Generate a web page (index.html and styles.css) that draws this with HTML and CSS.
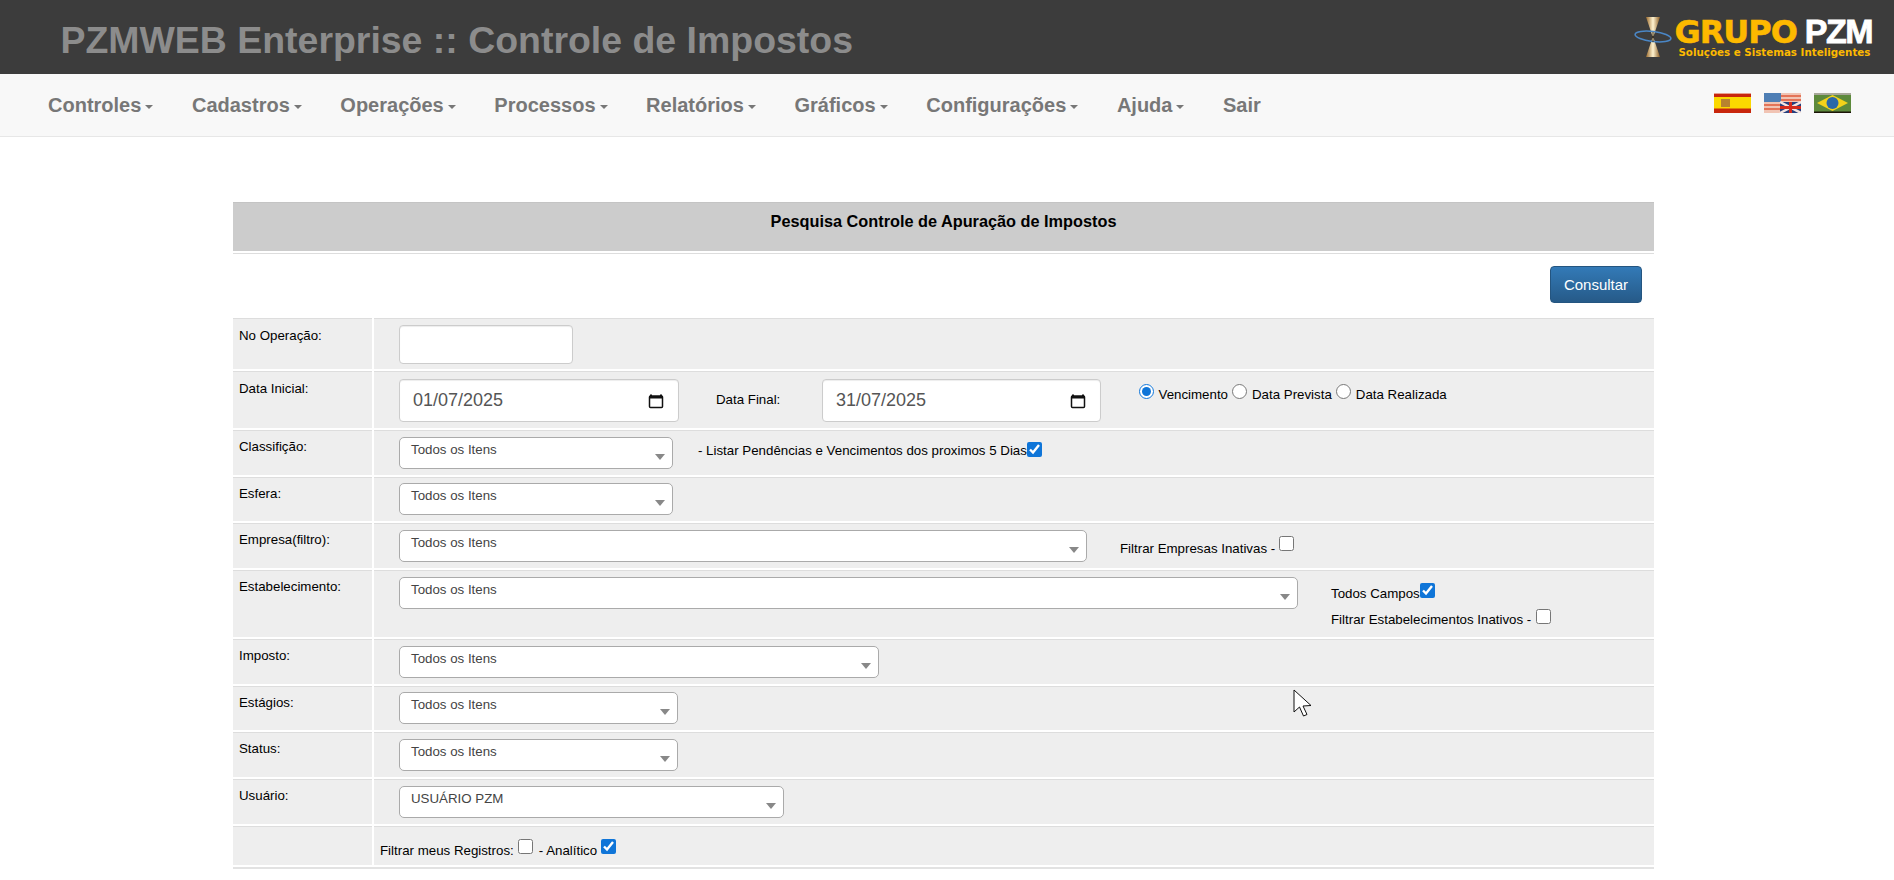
FILE: index.html
```html
<!DOCTYPE html>
<html lang="pt-BR">
<head>
<meta charset="utf-8">
<title>PZMWEB Enterprise :: Controle de Impostos</title>
<link rel="stylesheet" href="styles.css">
</head>
<body>
<header class="topbar">
  <h1 class="title">PZMWEB Enterprise :: Controle de Impostos</h1>
  <div class="logo">
    <svg class="logo-mark" width="38" height="40" viewBox="0 0 38 40">
      <defs>
        <linearGradient id="gold" x1="0" x2="1" y1="0" y2="0">
          <stop offset="0" stop-color="#9a6a2c"/>
          <stop offset=".5" stop-color="#fff3d0"/>
          <stop offset="1" stop-color="#8a5c24"/>
        </linearGradient>
      </defs>
      <path d="M12 0H26L19.6 19H18.4ZM18.4 21H19.6L26 40H12Z" fill="url(#gold)"/>
      <ellipse cx="19" cy="19.5" rx="18" ry="5" transform="rotate(7 19 19.5)" fill="none" stroke="#4a86c5" stroke-width="1.6"/>
      <rect x="18.5" y="15" width="1" height="10" fill="#3a2a10"/>
    </svg>
    <div class="logo-text">
      <div class="logo-name">GRUPO <span class="logo-white">PZM</span></div>
      <div class="logo-sub">Soluções e Sistemas Inteligentes</div>
    </div>
  </div>
</header>

<nav class="navbar">
  <ul class="menu">
    <li class="menu-item">Controles<span class="caret"></span></li>
    <li class="menu-item">Cadastros<span class="caret"></span></li>
    <li class="menu-item">Operações<span class="caret"></span></li>
    <li class="menu-item">Processos<span class="caret"></span></li>
    <li class="menu-item">Relatórios<span class="caret"></span></li>
    <li class="menu-item">Gráficos<span class="caret"></span></li>
    <li class="menu-item">Configurações<span class="caret"></span></li>
    <li class="menu-item">Ajuda<span class="caret"></span></li>
    <li class="menu-item">Sair</li>
  </ul>
  <div class="flags">
    <svg width="37" height="20" viewBox="0 0 37 20">
      <rect width="37" height="20" fill="#c8260c"/>
      <rect y="4" width="37" height="11.500" fill="#fbd800"/>
      <rect x="7" y="6" width="9" height="8" fill="#b8832e"/>
      <rect y="0" width="37" height="1" fill="#e8a090"/>
    </svg>
    <svg width="37" height="20" viewBox="0 0 37 20">
      <rect width="37" height="20" fill="#f1c4b4"/>
      <rect width="17" height="9" fill="#4f7fb5"/>
      <path d="M0 12H16M17 3H37M17 7H37M0 16H16" stroke="#e05a3a" stroke-width="1.4"/>
      <rect x="16" y="9" width="21" height="11" fill="#27407f"/>
      <path d="M16 9L37 20M37 9L16 20" stroke="#f4e4e0" stroke-width="2.500"/>
      <path d="M26.500 9V20M16 14.500H37" stroke="#d42a1c" stroke-width="3"/>
    </svg>
    <svg width="37" height="20" viewBox="0 0 37 20">
      <rect width="37" height="20" fill="#5d8a3c"/>
      <rect y="0" width="37" height="2" fill="#a8a89a"/>
      <rect y="18.500" width="37" height="1.500" fill="#1c1408"/>
      <path d="M18.500 2L34 10L18.500 18L3 10Z" fill="#f3d21a"/>
      <circle cx="18.500" cy="10" r="6" fill="#2a68a8"/>
    </svg>
  </div>
</nav>

<main class="page">
  <h2 class="panel-title">Pesquisa Controle de Apuração de Impostos</h2>
  <div class="actions"><button class="btn" type="button">Consultar</button></div>

  <div class="row row-top">
    <div class="cell-label">No Operação:</div>
    <div class="cell-value row-op"><input class="text-input" type="text"></div>
  </div>

  <div class="row row-top">
    <div class="cell-label">Data Inicial:</div>
    <div class="cell-value row-date">
      <div class="date-input date-from"><span>01/07/2025</span><svg class="cal" width="16" height="16" viewBox="0 0 16 16"><path d="M3 1.500V3M13 1.500V3" stroke="#111" stroke-width="2"/><rect x="1.500" y="3" width="13" height="11.500" rx="1" fill="none" stroke="#111" stroke-width="1.500"/><rect x="1.500" y="3" width="13" height="2.500" fill="#111"/></svg></div>
      <span class="date-label">Data Final:</span>
      <div class="date-input"><span>31/07/2025</span><svg class="cal" width="16" height="16" viewBox="0 0 16 16"><path d="M3 1.500V3M13 1.500V3" stroke="#111" stroke-width="2"/><rect x="1.500" y="3" width="13" height="11.500" rx="1" fill="none" stroke="#111" stroke-width="1.500"/><rect x="1.500" y="3" width="13" height="2.500" fill="#111"/></svg></div>
      <div class="radios">
        <input class="tick" type="radio" name="d" checked><span>Vencimento</span>
        <input class="tick" type="radio" name="d"><span>Data Prevista</span>
        <input class="tick" type="radio" name="d"><span>Data Realizada</span>
      </div>
    </div>
  </div>

  <div class="row">
    <div class="cell-label">Classifição:</div>
    <div class="cell-value">
      <div class="select w-class">Todos os Itens<span class="arrow"></span></div>
      <div class="note note-list"><span>- Listar Pendências e Vencimentos dos proximos 5 Dias</span><input class="tick" type="checkbox" checked></div>
    </div>
  </div>

  <div class="row">
    <div class="cell-label">Esfera:</div>
    <div class="cell-value"><div class="select w-class">Todos os Itens<span class="arrow"></span></div></div>
  </div>

  <div class="row">
    <div class="cell-label">Empresa(filtro):</div>
    <div class="cell-value">
      <div class="select w-emp">Todos os Itens<span class="arrow"></span></div>
      <div class="note note-emp"><span>Filtrar Empresas Inativas -</span><input class="tick tick-gap tick-up4" type="checkbox"></div>
    </div>
  </div>

  <div class="row">
    <div class="cell-label">Estabelecimento:</div>
    <div class="cell-value row-est">
      <div class="select w-est">Todos os Itens<span class="arrow"></span></div>
      <div class="note-stack">
        <div class="note"><span>Todos Campos</span><input class="tick tick-up3" type="checkbox" checked></div>
        <div class="note"><span>Filtrar Estabelecimentos Inativos -</span><input class="tick tick-gap-wide tick-up2" type="checkbox"></div>
      </div>
    </div>
  </div>

  <div class="row">
    <div class="cell-label">Imposto:</div>
    <div class="cell-value"><div class="select w-imp">Todos os Itens<span class="arrow"></span></div></div>
  </div>

  <div class="row">
    <div class="cell-label">Estágios:</div>
    <div class="cell-value"><div class="select w-est2">Todos os Itens<span class="arrow"></span></div></div>
  </div>

  <div class="row">
    <div class="cell-label">Status:</div>
    <div class="cell-value"><div class="select w-est2">Todos os Itens<span class="arrow"></span></div></div>
  </div>

  <div class="row">
    <div class="cell-label">Usuário:</div>
    <div class="cell-value"><div class="select w-user">USUÁRIO PZM<span class="arrow"></span></div></div>
  </div>

  <div class="row row-last">
    <div class="cell-label"></div>
    <div class="cell-value row-filter">
      <span>Filtrar meus Registros:</span><input class="tick tick-gap tick-up3" type="checkbox">
      <span class="after-tick">- Analítico</span><input class="tick tick-gap tick-up3" type="checkbox" checked>
    </div>
  </div>
</main>
<footer class="page-end"></footer>

<svg class="pointer" width="20" height="28" viewBox="0 0 20 28">
  <path d="M1 1V23L6.500 18L10.500 27L14 25.500L10 17L18 16.500Z" fill="#fff" stroke="#111" stroke-width="1"/>
</svg>
</body>
</html>
```

FILE: styles.css
```css
* { box-sizing: border-box; }
html, body { height: 880px; overflow: hidden; }
body {
  margin: 0;
  background: #fff;
  color: #000;
  font-family: "Liberation Sans", Arial, sans-serif;
  font-size: 13.3px;
  line-height: 17px;
}

.topbar {
  height: 74px;
  background: #3c3c3c;
  display: flex;
  align-items: flex-start;
  justify-content: space-between;
  padding: 0 22px 0 60.500px;
}
.title {
  margin: 18px 0 0;
  font-size: 37.45px;
  line-height: 44px;
  font-weight: 700;
  color: #8c8c8c;
}
.logo { display: flex; margin-top: 17px; }
.logo-mark { display: block; margin-right: 2px; }
.logo-text { font-family: "DejaVu Sans", sans-serif; font-weight: 700; color: #fdb900; }
.logo-name { font-size: 32px; line-height: 28px; letter-spacing: -1px; white-space: nowrap; -webkit-text-stroke: .5px #fdb900; }
.logo-white {
  color: #fff;
  font-family: "Liberation Sans", Arial, sans-serif;
  font-size: 34px;
  letter-spacing: -1.500px;
  margin-left: -2.400px;
  -webkit-text-stroke: .8px #fff;
}
.logo-sub { font-size: 10.3px; line-height: 13px; margin-left: 4px; white-space: nowrap; }

.navbar {
  height: 63px;
  background: #f8f8f8;
  border-bottom: 1px solid #e7e7e7;
  display: flex;
  justify-content: space-between;
  padding: 0 43px 0 48px;
}
.menu {
  list-style: none;
  margin: 0;
  padding: 0;
  display: flex;
  gap: 38.600px;
}
.menu-item {
  font-size: 20px;
  font-weight: 700;
  line-height: 62px;
  color: #777;
  white-space: nowrap;
}
.caret {
  display: inline-block;
  margin-left: 4px;
  vertical-align: middle;
  border-top: 4.500px solid #777;
  border-left: 4.500px solid transparent;
  border-right: 4.500px solid transparent;
}
.flags { display: flex; gap: 13px; padding-top: 19px; }
.flags svg { display: block; }

.page { padding: 65px 240px 0 233px; }
.panel-title {
  margin: 0;
  height: 49px;
  padding-top: 8px;
  background: #ccc;
  border-top: 1px solid #c4c4c4;
  text-align: center;
  font-size: 16.300px;
  line-height: 20px;
  font-weight: 700;
}
.actions {
  margin-top: 2px;
  border-top: 1px solid #ddd;
  height: 65px;
  display: flex;
  justify-content: flex-end;
  align-items: flex-start;
  padding: 12px 12px 0 0;
}
.btn {
  width: 92px;
  height: 37px;
  border: 1px solid #245580;
  border-radius: 4px;
  background: linear-gradient(#337ab7, #265a88);
  color: #fff;
  font: 15px "Liberation Sans", Arial, sans-serif;
}

.row { display: flex; gap: 2px; margin-bottom: 2px; }
.cell-label, .cell-value { background: #eee; border-top: 1px solid #ddd; }
.cell-label { width: 139px; flex: none; padding: 7px 0 0 6px; }
.row-top .cell-label { padding-top: 8px; }
.cell-value {
  flex: 1;
  display: flex;
  align-items: flex-start;
  padding: 5.700px 0 6px 25px;
  min-width: 0;
}
.row-op { padding-top: 6px; padding-bottom: 5px; }
.row-date { padding-top: 7px; padding-bottom: 6px; }
.row-est { padding-bottom: 8.800px; }
.row-last { margin-bottom: 0; padding-bottom: 2px; border-bottom: 2px solid #e2e2e2; }
.row-filter { padding: 15px 0 6px 6px; }

.text-input {
  width: 174px;
  height: 39px;
  background: #fff;
  border: 1px solid #ccc;
  border-radius: 4px;
  box-shadow: inset 0 1px 1px rgba(0,0,0,.075);
}
.date-input {
  width: 279px;
  height: 43px;
  background: #fff;
  border: 1px solid #ccc;
  border-radius: 4px;
  box-shadow: inset 0 1px 1px rgba(0,0,0,.075);
  display: flex;
  align-items: center;
  justify-content: space-between;
  padding: 0 14px 0 13px;
  font-size: 18px;
  color: #555;
}
.date-from { width: 280px; }
.cal { display: block; margin-top: 1px; }
.date-label { margin: 12px 41px 0 37px; width: 65px; white-space: nowrap; }
.radios { display: flex; align-items: flex-start; margin-left: 38px; padding-top: 5px; white-space: nowrap; }
.radios span { margin: 2px 4.500px 0 4.500px; }

.tick {
  width: 15px;
  height: 15px;
  margin: 0;
  flex: none;
  accent-color: #0f75d8;
}
.tick-gap { margin-left: 4px; }
.tick-gap-wide { margin-left: 5px; }
.tick-up2 { margin-top: -2.500px; }
.tick-up3 { margin-top: -2.700px; }
.tick-up4 { margin-top: -4px; }

.select {
  position: relative;
  height: 32px;
  flex: none;
  background: #fff;
  border: 1px solid #aaa;
  border-radius: 5px;
  padding: 3px 0 0 11px;
  color: #444;
  white-space: nowrap;
}
.arrow {
  position: absolute;
  right: 7px;
  top: 16px;
  border-top: 6px solid #888;
  border-left: 5px solid transparent;
  border-right: 5px solid transparent;
}
.w-class { width: 274px; }
.w-emp { width: 688px; }
.w-est { width: 899px; }
.w-imp { width: 480px; }
.w-est2 { width: 279px; }
.w-user { width: 385px; }

.note { display: flex; align-items: flex-start; white-space: nowrap; }
.note-list { margin: 5px 0 0 25px; }
.note-emp { margin: 9.600px 0 0 33px; }
.note-stack { margin: 8.500px 0 0 33px; display: flex; flex-direction: column; gap: 9px; }
.after-tick { margin-left: 6px; }

.page-end { margin-top: 11px; border-top: 1px solid #f5f5f5; }
.pointer { position: absolute; left: 1293px; top: 689px; }
```
